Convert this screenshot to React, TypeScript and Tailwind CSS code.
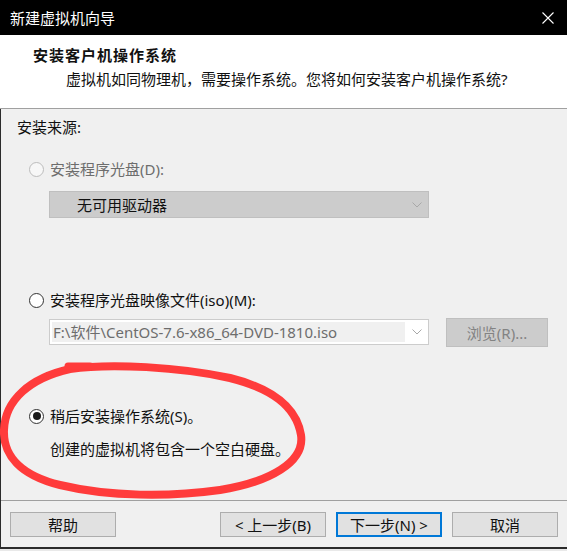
import type { ReactNode } from 'react'

function Radio({ checked = false, disabled = false }: { checked?: boolean; disabled?: boolean }) {
  return (
    <span
      className={
        'flex h-[15px] w-[15px] flex-none items-center justify-center rounded-full border ' +
        (disabled ? 'border-[#bcbcbc] bg-[#f7f7f7]' : 'border-[#333333] bg-white')
      }
    >
      {checked && <span className="h-[8px] w-[8px] rounded-full bg-[#1a1a1a]" />}
    </span>
  )
}

function Chevron() {
  return (
    <svg width="10" height="6" viewBox="0 0 10 6" fill="none" stroke="#a8a8a8" strokeWidth="1">
      <path d="M0.5 0.5L5 5L9.5 0.5" />
    </svg>
  )
}

function Button({ children, primary = false }: { children: ReactNode; primary?: boolean }) {
  return (
    <button
      className={
        'flex h-[25px] w-[106px] items-center justify-center bg-[#e1e1e1] text-[15px] leading-[20px] text-[#111] ' +
        (primary ? 'border-2 border-[#0078d7]' : 'border border-[#adadad]')
      }
    >
      {children}
    </button>
  )
}

export default function App() {
  return (
    <div className="relative h-[551px] w-[567px] overflow-hidden bg-[#e9e9e9] font-['Noto_Sans','Noto_Sans_CJK_SC',sans-serif] text-[15px] leading-[20px] text-[#111]">
      {/* title bar */}
      <div className="flex h-[35px] items-center justify-between bg-black pl-[10px] pr-[13px] text-white">
        <span className="text-[15px]">新建虚拟机向导</span>
        <svg width="12" height="12" viewBox="0 0 12 12" stroke="#fff" strokeWidth="1.1">
          <path d="M0.5 0.5L11.5 11.5M11.5 0.5L0.5 11.5" />
        </svg>
      </div>

      {/* header */}
      <div className="h-[74px] border-b border-[#a0a0a0] bg-white pt-[10px]">
        <div className="pl-[33px] font-bold tracking-[1px]">安装客户机操作系统</div>
        <div className="mt-[4px] pl-[66px]">虚拟机如同物理机，需要操作系统。您将如何安装客户机操作系统?</div>
      </div>

      <div className="border-b-2 border-l border-[#2b2b2b] bg-[#f0f0f0]">
        {/* body */}
        <div className="h-[391px] pt-[8px]">
          <div className="pl-[16px]">安装来源:</div>

          <div className="mt-[22px] flex items-center gap-[6px] pl-[28px] text-[#6d6d6d]">
            <Radio disabled />
            <span>安装程序光盘(D):</span>
          </div>
          <div className="ml-[48px] mt-[12px] flex h-[27px] w-[380px] items-center justify-between border border-[#bfbfbf] bg-[#cccccc] pl-[27px] pr-[6px]">
            <span>无可用驱动器</span>
            <Chevron />
          </div>

          <div className="mt-[72px] flex items-center gap-[6px] pl-[28px]">
            <Radio />
            <span>安装程序光盘映像文件(iso)(M):</span>
          </div>
          <div className="ml-[48px] mt-[8px] flex items-start gap-[17px]">
            <div className="mt-[1px] flex h-[26px] w-[380px] items-center border border-[#cccccc] bg-white p-[2px] pr-[6px]">
              <div className="flex h-[20px] w-[353px] items-center bg-[#f0f0f0] pl-[1px] text-[#6d6d6d]">
                F:\软件\CentOS-7.6-x86_64-DVD-1810.iso
              </div>
              <div className="ml-auto">
                <Chevron />
              </div>
            </div>
            <div className="flex h-[29px] w-[102px] items-center justify-center border border-[#bfbfbf] bg-[#cccccc] text-[#838383]">
              浏览(R)...
            </div>
          </div>

          <div className="mt-[59px] flex items-center gap-[6px] pl-[28px]">
            <Radio checked />
            <span>稍后安装操作系统(S)。</span>
          </div>
          <div className="mt-[13px] pl-[49px]">创建的虚拟机将包含一个空白硬盘。</div>
        </div>

        {/* footer */}
        <div className="flex h-[47px] items-start border-t border-[#a0a0a0] pl-[9px] pr-[9px] pt-[11px]">
          <Button>帮助</Button>
          <div className="ml-auto flex gap-[10px]">
            <Button>&lt; 上一步(B)</Button>
            <Button primary>下一步(N) &gt;</Button>
            <Button>取消</Button>
          </div>
        </div>
      </div>

      {/* red annotation loop */}
      <svg
        className="pointer-events-none absolute left-0 top-0"
        width="567"
        height="551"
        viewBox="0 0 567 551"
        fill="none"
        stroke="#ff3b3b"
        strokeWidth="8"
        strokeLinecap="round"
      >
        <path d="M70 369 C110 363 180 367 230 378 C270 388 296 405 301 435 C305 462 270 482 220 490 C170 497 110 497 60 485 C20 475 3 455 4 430 C5 400 30 378 70 369" />
        <path d="M68 366 L90 366" strokeWidth="7" />
      </svg>
    </div>
  )
}
